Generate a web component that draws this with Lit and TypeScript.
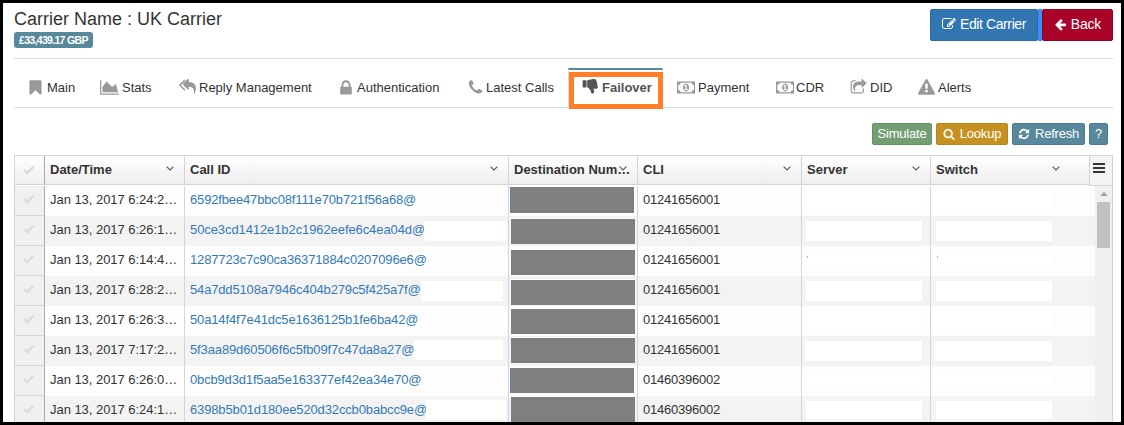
import { LitElement, html, css, svg } from "lit";
import { customElement, property } from "lit/decorators.js";

const ICONS: Record<string, { w: number; d: string }> = {
  bookmark: { w: 1792, d: "M1420 128q23 0 44 9 33 13 52.5 41t19.5 62v1289q0 34-19.5 62t-52.5 41q-19 8-44 8-48 0-83-32l-441-424-441 424q-36 33-83 33-23 0-44-9-33-13-52.5-41t-19.5-62v-1289q0-34 19.5-62t52.5-41q21-9 44-9h1048z" },
  area: { w: 2048, d: "M2048 1536v128h-2048v-1536h128v1408h1920zm-384-1024l256 896h-1664v-576l448-576 576 576z" },
  reply: { w: 1792, d: "M640 1082v70q0 42-39 59-13 5-25 5-27 0-45-19l-512-512q-19-19-19-45t19-45l512-512q29-31 70-14 39 17 39 59v69l-397 398q-19 19-19 45t19 45zm1152-58q0 58-17 133.5t-38.5 138-48 125-40.5 90.5l-20 40q-8 17-28 17-6 0-9-1-25-8-23-34 43-400-106-565-64-71-170.5-110.5t-267.5-52.5v251q0 42-39 59-13 5-25 5-27 0-45-19l-512-512q-19-19-19-45t19-45l512-512q29-31 70-14 39 17 39 59v262q411 28 599 221 169 173 169 509z" },
  lock: { w: 1792, d: "M640 768h512v-192q0-106-75-181t-181-75-181 75-75 181v192zm832 96v576q0 40-28 68t-68 28h-960q-40 0-68-28t-28-68v-576q0-40 28-68t68-28h32v-192q0-184 132-316t316-132 316 132 132 316v192h32q40 0 68 28t28 68z" },
  phone: { w: 1792, d: "M1600 1240q0 27-10 70.5t-21 68.5q-21 50-122 106-94 51-186 51-27 0-53-3.5t-57.5-12.5-47-14.5-55.5-20.5-49-18q-98-35-175-83-127-79-264-216t-216-264q-48-77-83-175-3-9-18-49t-20.5-55.5-14.5-47-12.5-57.5-3.5-53q0-92 51-186 56-101 106-122 25-11 68.5-21t70.5-10q14 0 21 3 18 6 53 76 11 19 30 54t35 63.5 31 53.5q3 4 17.5 25t21.5 35.5 7 28.5q0 20-28.5 50t-62 55-62 53-28.5 46q0 9 5 22.5t8.5 20.5 14 24 11.5 19q76 137 174 235t235 174q2 1 19 11.5t24 14 20.5 8.5 22.5 5q18 0 46-28.5t53-62 55-62 50-28.5q14 0 28.5 7t35.5 21.5 25 17.5q25 15 53.5 31t63.5 35 54 30q70 35 76 53 3 7 3 21z" },
  thumb: { w: 1792, d: "M320 320q0-26-19-45t-45-19q-27 0-45.5 19t-18.5 45q0 27 18.5 45.5t45.5 18.5q26 0 45-18.5t19-45.5zm160 512v-640q0-26-19-45t-45-19h-288q-26 0-45 19t-19 45v640q0 26 19 45t45 19h288q26 0 45-19t19-45zm1129-149q55 61 55 149-1 78-57.5 135t-134.5 57h-277q4 14 8 24t11 22 10 18q18 37 27 57t19 58.5 10 76.5q0 24-.5 39t-5 45-12 50-24 45-40 40.5-60 26-82.5 10.5q-26 0-45-19-20-20-34-50t-19.5-52-12.5-61q-9-42-13.5-60.5t-17.5-48.5-31-48q-33-33-101-120-49-64-101-121t-76-59q-25-2-43-20.5t-18-43.5v-641q0-26 19-44.5t45-19.5q35-1 158-44 77-26 120.5-39.5t121.5-29 144-15.5h129q133 2 197 78 58 69 49 181 39 37 54 94 17 61 0 117 46 61 43 137 0 32-15 76z" },
  money: { w: 1920, d: "M768 1152h384v-96h-128v-448h-114l-148 137 77 80q42-37 55-57h2v288h-128v96zm512-256q0 70-21 142t-59.5 134-101.5 101-138 39-138-39-101.5-101-59.5-134-21-142 21-142 59.5-134 101.5-101 138-39 138 39 101.5 101 59.5 134 21 142zm512 256v-512q-106 0-181-75t-75-181h-1152q0 106-75 181t-181 75v512q106 0 181 75t75 181h1152q0-106 75-181t181-75zm128-832v1152q0 26-19 45t-45 19h-1792q-26 0-45-19t-19-45v-1152q0-26 19-45t45-19h1792q26 0 45 19t19 45z" },
  share: { w: 1792, d: "M1472 989v259q0 119-84.5 203.5t-203.5 84.5h-832q-119 0-203.5-84.5t-84.5-203.5v-832q0-119 84.5-203.5t203.5-84.5h255q13 0 22.5 9.5t9.5 22.5q0 27-26 32-77 26-133 60-10 4-16 4h-112q-66 0-113 47t-47 113v832q0 66 47 113t113 47h832q66 0 113-47t47-113v-214q0-19 18-29 28-13 54-37 16-16 35-8 21 9 21 29zm237-496l-384 384q-18 19-45 19-12 0-25-5-39-17-39-59v-192h-160q-323 0-438 131-119 137-74 473 3 23-20 34-8 2-12 2-16 0-26-13-10-14-21-31t-39.5-68.5-49.5-99.5-38.5-114-17.5-122q0-49 3.5-91t14-90 28-88 47-81.5 68.5-74 94.5-61.5 124.5-48.5 159.5-30.5 196.5-11h160v-192q0-42 39-59 13-5 25-5 26 0 45 19l384 384q19 19 19 45t-19 45z" },
  warn: { w: 1792, d: "M1024 1375v-190q0-14-9.5-23.5t-22.5-9.5h-192q-13 0-22.5 9.5t-9.5 23.5v190q0 14 9.5 23.5t22.5 9.5h192q13 0 22.5-9.5t9.5-23.5zm-2-374l18-459q0-12-10-19-13-11-24-11h-220q-11 0-24 11-10 7-10 21l17 457q0 10 10 16.5t24 6.5h185q14 0 23.5-6.5t10.5-16.5zm-14-934l768 1408q35 63-2 126-17 29-46.5 46t-63.5 17h-1536q-34 0-63.5-17t-46.5-46q-37-63-2-126l768-1408q17-31 47-49t65-18 65 18 47 49z" },
  search: { w: 1792, d: "M1216 832q0-185-131.5-316.5t-316.5-131.5-316.5 131.5-131.5 316.5 131.5 316.5 316.5 131.5 316.5-131.5 131.5-316.5zm512 832q0 52-38 90t-90 38q-54 0-90-38l-343-342q-179 124-399 124-143 0-273.5-55.5t-225-150-150-225-55.5-273.5 55.5-273.5 150-225 225-150 273.5-55.5 273.5 55.5 225 150 150 225 55.5 273.5q0 220-124 399l343 343q37 37 37 90z" },
  refresh: { w: 1792, d: "M1639 1056q0 5-1 7-64 268-268 434.5t-478 166.5q-146 0-282.5-55t-243.5-157l-129 129q-19 19-45 19t-45-19-19-45v-448q0-26 19-45t45-19h448q26 0 45 19t19 45-19 45l-137 137q71 66 161 102t187 36q134 0 250-65t186-179q11-17 53-117 8-23 30-23h192q13 0 22.5 9.5t9.5 22.5zm25-800v448q0 26-19 45t-45 19h-448q-26 0-45-19t-19-45 19-45l138-138q-148-137-349-137-134 0-250 65t-186 179q-11 17-53 117-8 23-30 23h-199q-13 0-22.5-9.5t-9.5-22.5v-7q65-268 270-434.5t480-166.5q146 0 284 55.5t245 156.5l130-129q19-19 45-19t45 19 19 45z" },
  edit: { w: 1792, d: "M888 1184l116-116-152-152-116 116v56h96v96h56zm440-720q-16-16-33 1l-350 350q-17 17-1 33t33-1l350-350q17-17 1-33zm80 594v190q0 119-84.5 203.5t-203.5 84.5h-832q-119 0-203.5-84.5t-84.5-203.5v-832q0-119 84.5-203.5t203.5-84.5h832q63 0 117 25 15 7 18 23 3 17-9 29l-49 49q-14 14-32 8-23-6-45-6h-832q-66 0-113 47t-47 113v832q0 66 47 113t113 47h832q66 0 113-47t47-113v-126q0-13 9-22l64-64q15-15 35-7t20 29zm-96-738l288 288-672 672h-288v-288zm444 132l-92 92-288-288 92-92q28-28 68-28t68 28l152 152q28 28 28 68t-28 68z" },
  back: { w: 1792, d: "M1664 896v128q0 53-32.5 90.5t-84.5 37.5h-704l293 294q38 36 38 90t-38 90l-75 76q-37 37-90 37-52 0-91-37l-651-652q-37-37-37-90 0-52 37-91l651-650q38-38 91-38 52 0 90 38l75 74q38 38 38 91t-38 91l-293 293h704q52 0 84.5 37.5t32.5 90.5z" },
};

@customElement("fa-icon")
class FaIcon extends LitElement {
  @property() name = "";
  @property({ type: Number }) size = 18;
  static styles = css`
    :host { display: inline-flex; flex: none; }
    svg { display: block; fill: currentColor; }
  `;
  render() {
    const i = ICONS[this.name];
    if (!i) return html``;
    return html`<svg width=${(this.size * i.w) / 1792} height=${this.size} viewBox="0 0 ${i.w} 1792">${svg`<path d=${i.d} />`}</svg>`;
  }
}

/* icon, label, tab width, left padding, icon slot width */
const TABS: [string, string, number, number, number][] = [
  ["bookmark", "Main", 71, 12, 20],
  ["area", "Stats", 79, 14, 22],
  ["reply", "Reply Management", 160, 14, 20],
  ["lock", "Authentication", 129, 12, 20],
  ["phone", "Latest Calls", 114, 13, 19],
  ["thumb", "Failover", 95, 13, 20],
  ["money", "Payment", 98, 14, 21],
  ["money", "CDR", 74, 15, 20],
  ["share", "DID", 68, 15, 20],
  ["warn", "Alerts", 100, 15, 20],
];

interface Mask { x: number; y: number; w: number; h: number }
interface Row { date: string; id: string; ls: number; cli: string; gx: number; gy: number; gh: number; idMask?: Mask; sx: number; sy: number; sh: number }

const ROWS: Row[] = [
  { date: "Jan 13, 2017 6:24:2…", id: "6592fbee47bbc08f111e70b721f56a68@", ls: -0.15, cli: "01241656001", gx: 1, gy: 1, gh: 26, sx: 4, sy: 3, sh: 20 },
  { date: "Jan 13, 2017 6:26:1…", id: "50ce3cd1412e1b2c1962eefe6c4ea04d@", ls: -0.09, cli: "01241656001", gx: 2, gy: 3, gh: 25, idMask: { x: 239, y: 5, w: 83, h: 20 }, sx: 4, sy: 5, sh: 20 },
  { date: "Jan 13, 2017 6:14:4…", id: "1287723c7c90ca36371884c0207096e6@", ls: -0.15, cli: "01241656001", gx: 2, gy: 4, gh: 25, sx: 4, sy: 5, sh: 20 },
  { date: "Jan 13, 2017 6:28:2…", id: "54a7dd5108a7946c404b279c5f425a7f@", ls: -0.16, cli: "01241656001", gx: 2, gy: 4, gh: 25, idMask: { x: 236, y: 5, w: 82, h: 20 }, sx: 4, sy: 5, sh: 20 },
  { date: "Jan 13, 2017 6:26:3…", id: "50a14f4f7e41dc5e1636125b1fe6ba42@", ls: -0.14, cli: "01241656001", gx: 2, gy: 3, gh: 25, sx: 3, sy: 5, sh: 20 },
  { date: "Jan 13, 2017 7:17:2…", id: "5f3aa89d60506f6c5fb09f7c47da8a27@", ls: -0.13, cli: "01241656001", gx: 2, gy: 2, gh: 25, idMask: { x: 229, y: 4, w: 89, h: 20 }, sx: 3, sy: 5, sh: 20 },
  { date: "Jan 13, 2017 6:26:0…", id: "0bcb9d3d1f5aa5e163377ef42ea34e70@", ls: -0.16, cli: "01460396002", gx: 1, gy: 2, gh: 25, sx: 4, sy: 5, sh: 20 },
  { date: "Jan 13, 2017 6:24:1…", id: "6398b5b01d180ee520d32ccb0babcc9e@", ls: -0.14, cli: "01460396002", gx: 2, gy: 1, gh: 25, idMask: { x: 241, y: 4, w: 80, h: 20 }, sx: 4, sy: 5, sh: 18 },
];

@customElement("app-root")
class AppRoot extends LitElement {
  static styles = css`
    :host { display: block; box-sizing: border-box; width: 1124px; height: 425px; border: 3px solid #000; background: #fff; overflow: hidden; font: 13px/18px "Liberation Sans", Arial, sans-serif; color: #333; }
    * { box-sizing: border-box; }
    .page { padding: 0 8px 0 11px; height: 419px; display: flex; flex-direction: column; }
    .head { height: 56px; flex: none; display: flex; justify-content: space-between; border-bottom: 1px solid #ddd; }
    .title { font-size: 18px; line-height: 20px; margin-top: 6px; white-space: nowrap; }
    .badge { width: 79px; height: 16px; margin-top: 3px; border-radius: 3px; background: #57889c; color: #fff; font-weight: 700; font-size: 10.5px; line-height: 16px; padding-left: 5px; white-space: nowrap; letter-spacing: -0.68px; }
    .actions { display: flex; margin-top: 6px; height: 32px; background: linear-gradient(#3a8fff, #3a8fff) 108px 0 / 4px 32px no-repeat; gap: 4px; }
    .btn { display: flex; align-items: center; justify-content: center; color: #fff; border: 1px solid; border-radius: 2px; white-space: nowrap; }
    .big { font-size: 14px; line-height: 18px; height: 32px; gap: 4px; letter-spacing: -0.4px; padding-bottom: 2px; }
    .edit { width: 108px; background: #3276b1; border-color: #2c699d; }
    .back { width: 71px; background: #a90329; border-color: #900323; letter-spacing: -0.2px; }
    .tabs { height: 49px; flex: none; display: flex; border-bottom: 1px solid #ddd; padding: 9px 0 0 1px; }
    .tab { height: 39px; display: flex; align-items: center; white-space: nowrap; color: #333; flex: none; }
    .slot { display: flex; color: #999; flex: none; }
    .active { position: relative; height: 40px; border: 1px solid #ddd; border-top: 2px solid #57889c; border-bottom: 0; padding-bottom: 3px; background: #fff; font-weight: 700; color: #555; }
    .active .slot { color: #555; }
    .ring { position: absolute; left: 0; top: 2px; width: 94px; height: 37px; border: 5px solid #ff7f27; }
    .tools { height: 47px; flex: none; padding: 15px 5px 0 0; display: flex; justify-content: flex-end; gap: 4px; }
    .small { height: 22px; font-size: 13px; gap: 5px; letter-spacing: -0.2px; }
    .simulate { width: 60px; background: #739e73; border-color: #659265; }
    .lookup { width: 72px; background: #c79121; border-color: #b7851e; }
    .refresh { width: 73px; background: #57889c; border-color: #4e7a8c; }
    .help { width: 19px; background: #57889c; border-color: #4e7a8c; }
    .grid { border: 1px solid #d4d4d4; border-bottom: 0; flex: none; width: 1099px; height: 267px; overflow: hidden; }
    .ghead { display: grid; grid-template-columns: 30px 140px 324px 129px 164px 129px 158px 23px; height: 30px; }
    .hc { height: 29px; background: linear-gradient(#fff, #eee); border-right: 1px solid #d4d4d4; border-bottom: 1px solid #d4d4d4; font-weight: 700; padding: 0 10px 0 5px; display: flex; justify-content: space-between; align-items: center; white-space: nowrap; color: #333; }
    .hc.check { padding: 0 0 0 8px; border-right-color: #aaa; }
    .hc.last { padding-right: 29px; border-right: 0; }
    .hc svg { margin-top: -4px; flex: none; }
    .hc.check svg { margin: 0; }
    .hc.dest svg { margin-left: -16px; }
    .menu { height: 30px; background: #f3f3f3; border-left: 1px solid #d4d4d4; border-bottom: 1px solid #d4d4d4; display: flex; justify-content: center; padding: 7px 4px 0 0; }
    .gbody { display: flex; height: 237px; overflow: hidden; }
    .rows { width: 1080px; flex: none; }
    .row { display: grid; grid-template-columns: 30px 140px 324px 129px 164px 129px 164px; height: 30px; background: #fdfdfd; }
    .row.alt { background: #f3f3f3; }
    .c { border-right: 1px solid #d4d4d4; height: 30px; padding: 0 0 3px 5px; display: flex; align-items: center; white-space: nowrap; position: relative; overflow: hidden; color: #333; }
    .c.check { background: #f0f0ee; border-right-color: #aaa; border-bottom: 1px solid #d4d4d4; padding: 0 0 3px 8px; }
    .c.end { border-right: 0; }
    .c.date { letter-spacing: -0.04px; }
    .id { color: #337ab7; }
    .cli { letter-spacing: -0.22px; }
    .mask { position: absolute; background: #fff; }
    .gray { position: absolute; background: #7f7f7f; border-left: 1px solid #6084b8; width: 124px; }
    .alt .gray { box-shadow: 0 -1px #fff; }
    .bar { width: 17px; flex: none; background: #f0f0f0; padding: 6px 2px 0; }
    .arrow { width: 0; height: 0; margin: 0 auto; border: 4px solid transparent; border-top: 0; border-bottom-color: #a3a3a3; }
    .thumb { margin-top: 6px; height: 46px; background: #c1c1c1; }
  `;

  tick() {
    return html`<svg width="12" height="10" viewBox="0 0 12 10"><path d="M1.2 5.2 L4.3 8 L10.6 1.6" fill="none" stroke="#dcdcdc" stroke-width="2.6" /></svg>`;
  }
  caret() {
    return html`<svg width="8" height="5" viewBox="0 0 8 5"><path d="M0.6 0.6 L4 4 L7.4 0.6" fill="none" stroke="#555" stroke-width="1.1" /></svg>`;
  }
  rect(m: Mask) {
    return html`<span class="mask" style="left:${m.x}px;top:${m.y}px;width:${m.w}px;height:${m.h}px"></span>`;
  }
  row(r: Row, i: number) {
    const s = { x: r.sx, y: r.sy, w: 120 - r.sx, h: r.sh };
    return html`<div class="row ${i % 2 ? "alt" : ""}">
      <div class="c check">${this.tick()}</div>
      <div class="c date">${r.date}</div>
      <div class="c id" style="letter-spacing:${r.ls}px">${r.id}${r.idMask ? this.rect(r.idMask) : ""}</div>
      <div class="c"><span class="gray" style="left:${r.gx}px;top:${r.gy}px;height:${r.gh}px"></span></div>
      <div class="c cli">${r.cli}</div>
      <div class="c">${this.rect(s)}${i === 2 ? html`<span class="mask" style="left:5px;top:10px;width:1px;height:2px;background:#bbb"></span>` : ""}</div>
      <div class="c end">${this.rect({ ...s, x: s.x + 1 })}${i === 2 ? html`<span class="mask" style="left:6px;top:10px;width:1px;height:2px;background:#bbb"></span>` : ""}</div>
    </div>`;
  }
  render() {
    return html`<div class="page">
      <div class="head">
        <div><div class="title">Carrier Name : UK Carrier</div><div class="badge">£33,439.17 GBP</div></div>
        <div class="actions">
          <div class="btn big edit"><fa-icon name="edit" size="14"></fa-icon>Edit Carrier</div>
          <div class="btn big back"><fa-icon name="back" size="13"></fa-icon>Back</div>
        </div>
      </div>
      <div class="tabs">
        ${TABS.map(([icon, label, w, p, slot]) => html`<div class="tab ${icon === "thumb" ? "active" : ""}" style="width:${w}px;padding-left:${p}px">
          <span class="slot" style="width:${slot}px"><fa-icon name=${icon} size=${icon === "lock" ? 18 : 17}></fa-icon></span>${label}${icon === "thumb" ? html`<span class="ring"></span>` : ""}
        </div>`)}
      </div>
      <div class="tools">
        <div class="btn small simulate">Simulate</div>
        <div class="btn small lookup"><fa-icon name="search" size="12"></fa-icon>Lookup</div>
        <div class="btn small refresh"><fa-icon name="refresh" size="12"></fa-icon>Refresh</div>
        <div class="btn small help">?</div>
      </div>
      <div class="grid">
        <div class="ghead">
          <div class="hc check">${this.tick()}</div>
          <div class="hc">Date/Time${this.caret()}</div>
          <div class="hc">Call ID${this.caret()}</div>
          <div class="hc dest">Destination Num…${this.caret()}</div>
          <div class="hc">CLI${this.caret()}</div>
          <div class="hc">Server${this.caret()}</div>
          <div class="hc last">Switch${this.caret()}</div>
          <div class="menu"><svg width="12" height="10" viewBox="0 0 12 10"><path d="M0 1h12M0 5h12M0 9h12" stroke="#333" stroke-width="2" /></svg></div>
        </div>
        <div class="gbody">
          <div class="rows">${ROWS.map((r, i) => this.row(r, i))}</div>
          <div class="bar"><div class="arrow"></div><div class="thumb"></div></div>
        </div>
      </div>
    </div>`;
  }
}
